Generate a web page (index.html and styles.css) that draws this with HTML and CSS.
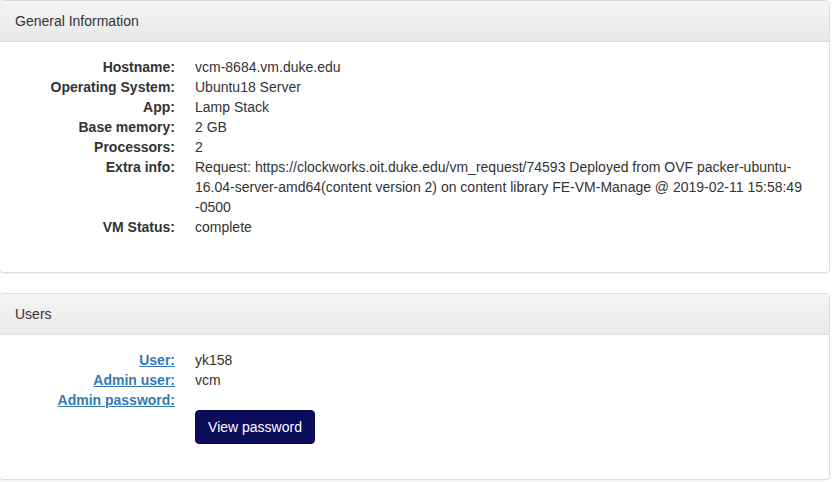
FILE: index.html
```html
<!DOCTYPE html>
<html>
<head>
<meta charset="utf-8">
<link rel="stylesheet" href="styles.css">
</head>
<body>
<div class="panel">
  <div class="panel-heading">General Information</div>
  <div class="panel-body">
    <dl class="info">
      <dt>Hostname:</dt><dd>vcm-8684.vm.duke.edu</dd>
      <dt>Operating System:</dt><dd>Ubuntu18 Server</dd>
      <dt>App:</dt><dd>Lamp Stack</dd>
      <dt>Base memory:</dt><dd>2 GB</dd>
      <dt>Processors:</dt><dd>2</dd>
      <dt>Extra info:</dt><dd>Request: https://clockworks.oit.duke.edu/vm_request/74593 Deployed from OVF packer-ubuntu-16.04-server-amd64(content version 2) on content library FE-VM-Manage @ 2019-02-11 15:58:49 -0500</dd>
      <dt>VM Status:</dt><dd>complete</dd>
    </dl>
  </div>
</div>
<div class="panel">
  <div class="panel-heading">Users</div>
  <div class="panel-body">
    <dl class="info">
      <dt><a href="#">User:</a></dt><dd>yk158</dd>
      <dt><a href="#">Admin user:</a></dt><dd>vcm</dd>
      <dt><a href="#">Admin password:</a></dt><dd>&nbsp;</dd>
      <dt class="empty"></dt><dd><button class="btn">View password</button></dd>
    </dl>
  </div>
</div>
</body>
</html>
```
FILE: styles.css
```css
html, body {
  margin: 0;
  padding: 0;
  background: #fff;
}
body {
  font-family: "Liberation Sans", Arial, sans-serif;
  font-size: 14px;
  line-height: 20px;
  color: #333;
}
.panel {
  margin: 0 5px 20px -1px;
  background: #fff;
  border: 1px solid #ddd;
  border-radius: 4px;
  box-shadow: 0 1px 1px rgba(0,0,0,0.05);
}
.panel-heading {
  padding: 10px 15px;
  background: linear-gradient(to bottom, #f5f5f5 0%, #e8e8e8 100%);
  border-bottom: 1px solid #ddd;
  border-radius: 3px 3px 0 0;
  color: #333;
}
.panel-body {
  padding: 15px;
}
.info {
  display: grid;
  grid-template-columns: 160px 1fr;
  column-gap: 20px;
  margin: 0 0 20px 0;
}
.info dt {
  font-weight: bold;
  text-align: right;
  white-space: nowrap;
}
.info dd {
  margin: 0;
}
.info a {
  color: #337ab7;
  text-decoration: underline;
}
.btn {
  display: inline-block;
  font-family: "Liberation Sans", Arial, sans-serif;
  font-size: 14px;
  line-height: 20px;
  padding: 6px 12px;
  width: 120px;
  height: 34px;
  color: #fff;
  background: #0c0b5c;
  border: 1px solid #0a0950;
  border-radius: 4px;
  cursor: pointer;
}
```
